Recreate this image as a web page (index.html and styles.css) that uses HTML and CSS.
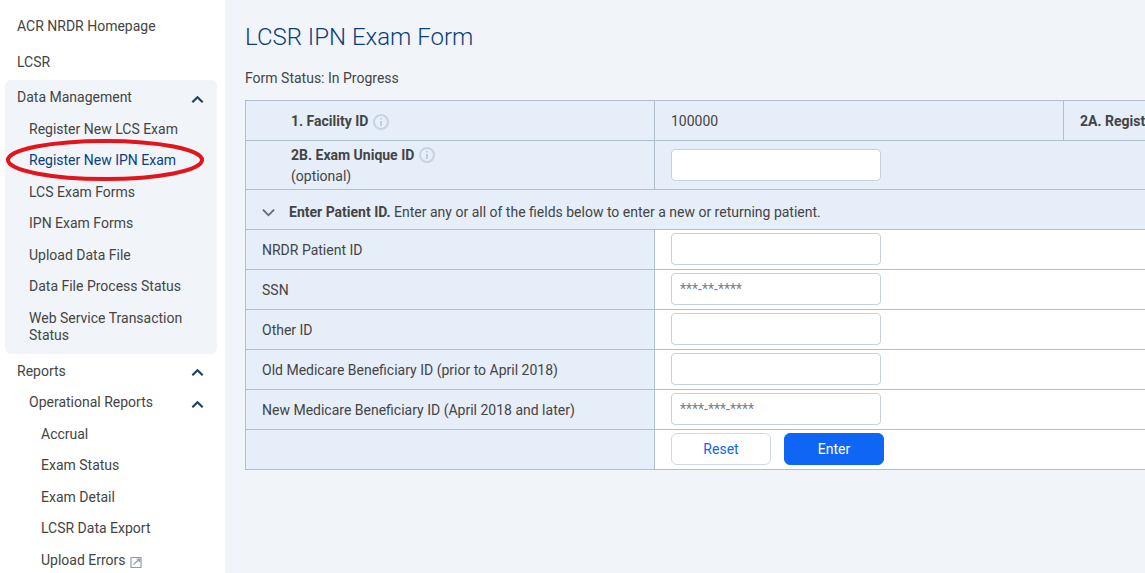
FILE: index.html
```html
<!DOCTYPE html>
<html lang="en">
<head>
<meta charset="utf-8">
<title>LCSR IPN Exam Form</title>
<link rel="stylesheet" href="styles.css">
</head>
<body>
<div class="app">
  <nav class="sidebar">
    <a class="item top first">ACR NRDR Homepage</a>
    <a class="item top">LCSR</a>
    <div class="group">
      <div class="item head">Data Management<svg class="chev" viewBox="0 0 12 8"><path d="M1.200 6.600 6 1.900l4.800 4.700"/></svg></div>
      <a class="item sub">Register New LCS Exam</a>
      <a class="item sub active">Register New IPN Exam</a>
      <a class="item sub">LCS Exam Forms</a>
      <a class="item sub">IPN Exam Forms</a>
      <a class="item sub">Upload Data File</a>
      <a class="item sub">Data File Process Status</a>
      <a class="item sub wrap">Web Service Transaction Status</a>
    </div>
    <div class="plain">
      <div class="item head">Reports<svg class="chev" viewBox="0 0 12 8"><path d="M1.200 6.600 6 1.900l4.800 4.700"/></svg></div>
      <div class="item sub head">Operational Reports<svg class="chev" viewBox="0 0 12 8"><path d="M1.200 6.600 6 1.900l4.800 4.700"/></svg></div>
      <a class="item subsub">Accrual</a>
      <a class="item subsub">Exam Status</a>
      <a class="item subsub">Exam Detail</a>
      <a class="item subsub">LCSR Data Export</a>
      <a class="item subsub">Upload Errors <svg class="ext" viewBox="0 0 12 12"><path d="M1 1.500h10v10H1zM3.500 8.500 9.500 3M6.500 3h3v3"/></svg></a>
    </div>
    <svg class="ring" viewBox="0 0 200 44"><ellipse cx="100" cy="22" rx="97" ry="19"/></svg>
  </nav>
  <main class="main">
    <h1 class="title">LCSR IPN Exam Form</h1>
    <p class="status">Form Status: In Progress</p>
    <div class="form">
      <div class="row r40 first-row">
        <div class="label shade indent"><b>1. Facility ID</b><svg class="info" viewBox="0 0 16 16"><circle cx="8" cy="8" r="7"/><path d="M8 7v5M8 4v1.600"/></svg></div>
        <div class="value shade narrow lift">100000</div>
        <div class="extra shade"><b>2A. Registry Exam ID</b></div>
      </div>
      <div class="row r49">
        <div class="label shade indent stack">
          <div><b>2B. Exam Unique ID</b><svg class="info" viewBox="0 0 16 16"><circle cx="8" cy="8" r="7"/><path d="M8 7v5M8 4v1.600"/></svg></div>
          <div>(optional)</div>
        </div>
        <div class="value shade grow"><input class="field" type="text"></div>
      </div>
      <div class="row r40 band">
        <svg class="down" viewBox="0 0 14 9"><path d="M1 1.500 7 7.500l6-6"/></svg>
        <span><b>Enter Patient ID.</b> Enter any or all of the fields below to enter a new or returning patient.</span>
      </div>
      <div class="row r40">
        <div class="label shade">NRDR Patient ID</div>
        <div class="value grow tight"><input class="field" type="text"></div>
      </div>
      <div class="row r40">
        <div class="label shade">SSN</div>
        <div class="value grow tight"><input class="field" type="text" placeholder="***-**-****"></div>
      </div>
      <div class="row r40">
        <div class="label shade">Other ID</div>
        <div class="value grow tight"><input class="field" type="text"></div>
      </div>
      <div class="row r40">
        <div class="label shade">Old Medicare Beneficiary ID (prior to April 2018)</div>
        <div class="value grow tight"><input class="field" type="text"></div>
      </div>
      <div class="row r40">
        <div class="label shade">New Medicare Beneficiary ID (April 2018 and later)</div>
        <div class="value grow tight"><input class="field" type="text" placeholder="****-***-****"></div>
      </div>
      <div class="row r40">
        <div class="label shade"></div>
        <div class="value grow tight actions">
          <button class="btn reset" type="button">Reset</button>
          <button class="btn enter" type="button">Enter</button>
        </div>
      </div>
    </div>
  </main>
</div>
</body>
</html>
```

FILE: styles.css
```css
* { box-sizing: border-box; }
html, body { margin: 0; height: 100%; overflow: hidden; }
body {
  font-family: Roboto, "Liberation Sans", sans-serif;
  font-size: 14px;
  line-height: 17px;
  color: #444;
  background: #f1f5fa;
}
.app { display: flex; height: 573px; overflow: hidden; }

.sidebar {
  position: relative;
  flex: 0 0 225px;
  height: 600px;
  background: #fff;
  padding: 8px 8px 0 5px;
}
.item {
  display: flex;
  align-items: center;
  min-height: 31.500px;
  padding-left: 12px;
  padding-right: 13px;
  justify-content: space-between;
}
.top { height: 36px; }
.group {
  background: #f1f5fa;
  border-radius: 6px;
  padding-top: 2px;
  padding-bottom: 3px;
}
.plain { padding-top: 2px; }
.sub { padding-left: 24px; }
.subsub { padding-left: 36px; justify-content: flex-start; gap: 4px; }
.active { color: #0b3d7e; justify-content: flex-start; }
.wrap { padding-top: 7px; padding-bottom: 7px; padding-right: 30px; }
.chev { width: 13px; height: 9px; margin-top: 3px; fill: none; stroke: #23405c; stroke-width: 2; }
.ext { width: 12px; height: 12px; margin-top: 3px; fill: none; stroke: #8a9db5; stroke-width: 1.200; }
.ring {
  position: absolute;
  left: 5px;
  top: 138px;
  width: 200px;
  height: 44px;
  fill: none;
  stroke: #e2141c;
  stroke-width: 4;
}

.main { flex: 1 1 auto; min-width: 0; padding: 0 0 0 20px; overflow: hidden; }
.title {
  margin: 21px 0 0;
  font-size: 24px;
  line-height: 32px;
  font-weight: 300;
  color: #0b3d7e;
}
.status { margin: 17px 0 0; height: 17px; }
.form { width: 1100px; margin-top: 13px; border-left: 1px solid #b0bfcd; border-top: 1px solid #b0bfcd; }
.row { display: flex; border-bottom: 1px solid #b0bfcd; background: #fff; }
.r40 { height: 40px; }
.r49 { height: 49px; }
.label {
  flex: 0 0 409px;
  display: flex;
  align-items: center;
  padding-top: 2px;
  padding-left: 16px;
  border-right: 1px solid #b0bfcd;
}
.shade { background: #e6eef9; }
.indent { padding-left: 45px; }
.stack { flex-direction: column; align-items: flex-start; justify-content: center; gap: 3px; padding-top: 1px; }
.stack > div { display: flex; align-items: center; line-height: 18px; }
b { font-weight: 700; }
.info { width: 16px; height: 16px; margin-left: 5px; fill: none; stroke: #c5d4e2; stroke-width: 2; }
.info path { stroke: #b4c5d6; stroke-width: 1.500; }
.value { display: flex; align-items: center; padding-left: 16px; }
.lift { padding-top: 2px; }
.tight { padding-bottom: 1px; }
.narrow { flex: 0 0 409px; border-right: 1px solid #b0bfcd; }
.grow { flex: 1 1 auto; }
.extra { flex: 1 1 auto; display: flex; align-items: center; padding-top: 2px; padding-left: 16px; white-space: nowrap; }
.band { background: #e6eef9; align-items: center; padding-left: 16px; padding-top: 5px; }
.down { width: 13px; height: 9px; margin-top: 1px; margin-right: 14px; fill: none; stroke: #5a6b7d; stroke-width: 2; }
.field {
  width: 210px;
  height: 32px;
  padding: 0 8px;
  border: 1px solid #c5d1de;
  border-radius: 4px;
  background: #fff;
  font: 14px Roboto, "Liberation Sans", sans-serif;
  outline: none;
}
.field::placeholder { color: #757f8a; opacity: 1; }
.actions { gap: 13px; }
.btn {
  width: 100px;
  height: 32px;
  border-radius: 6px;
  font: 14px Roboto, "Liberation Sans", sans-serif;
  padding: 0;
}
.reset { background: #fff; color: #0f66f5; border: 1px solid #d0dae6; }
.enter { background: #0f66f5; color: #fff; border: 1px solid #0f66f5; }
```
